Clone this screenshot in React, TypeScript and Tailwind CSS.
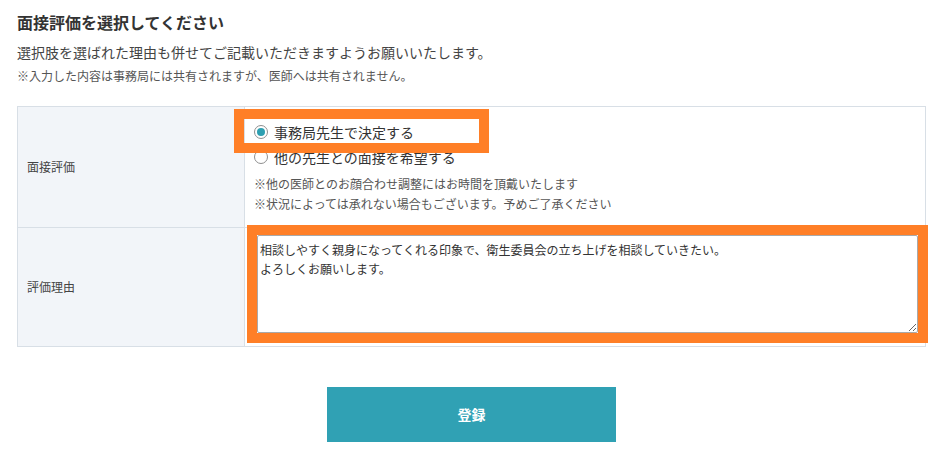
import React from "react";

function Radio({ checked, label }: { checked?: boolean; label: string }) {
  return (
    <label className="flex h-[24px] items-center gap-[6px] text-[14px] text-[#333]">
      <span className="flex h-[14px] w-[14px] items-center justify-center rounded-full border border-[#8f8f8f] bg-white">
        {checked && <span className="h-[8px] w-[8px] rounded-full bg-[#2e9fb1]" />}
      </span>
      {label}
    </label>
  );
}

export default function App() {
  return (
    <div className="relative h-[466px] w-[946px] bg-white px-[17px] pt-[12px] font-['Noto_Sans_CJK_JP',sans-serif] text-[#333]">
      <h2 className="text-[16px] font-bold leading-[20px] text-[#333]">面接評価を選択してください</h2>
      <p className="mt-[10px] text-[14px] leading-[20px] text-[#444]">
        選択肢を選ばれた理由も併せてご記載いただきますようお願いいたします。
      </p>
      <p className="mt-[5px] text-[12px] leading-[18px] text-[#555]">
        ※入力した内容は事務局には共有されますが、医師へは共有されません。
      </p>

      <div className="mt-[21px] w-[909px] border border-[#d8dfe6]">
        <div className="flex h-[121px] border-b border-[#d8dfe6]">
          <div className="flex w-[227px] items-center border-r border-[#d8dfe6] bg-[#f2f5f9] pl-[9px] text-[12px] text-[#444]">
            面接評価
          </div>
          <div className="flex-1 pl-[9px] pt-[13px]">
            <div className="flex flex-col gap-[1px]">
              <Radio checked label="事務局先生で決定する" />
              <Radio label="他の先生との面接を希望する" />
            </div>
            <div className="mt-[5px] text-[12px] leading-[20px] text-[#555]">
              <p>※他の医師とのお顔合わせ調整にはお時間を頂戴いたします</p>
              <p>※状況によっては承れない場合もございます。予めご了承ください</p>
            </div>
          </div>
        </div>
        <div className="flex h-[118px]">
          <div className="flex w-[227px] items-center border-r border-[#d8dfe6] bg-[#f2f5f9] pl-[9px] text-[12px] text-[#444]">
            評価理由
          </div>
          <div className="flex-1 pl-[12px] pt-[7px]">
            <textarea
              className="block h-[98px] w-[661px] rounded-[2px] border border-[#a9a9a9] px-[2px] pt-[4px] text-[12px] leading-[19px] text-[#333] outline-none"
              defaultValue={"相談しやすく親身になってくれる印象で、衛生委員会の立ち上げを相談していきたい。\nよろしくお願いします。"}
            />
          </div>
        </div>
      </div>

      <div className="mt-[40px] flex w-[909px] justify-center">
        <button className="h-[55px] w-[289px] bg-[#30a1b4] text-[14px] font-bold text-white">登録</button>
      </div>

      <div className="absolute left-[234px] top-[109px] h-[44px] w-[255px] border-[10px] border-[#ff7f27]" />
      <div className="absolute left-[247px] top-[225px] h-[118px] w-[681px] border-[10px] border-[#ff7f27]" />
    </div>
  );
}
